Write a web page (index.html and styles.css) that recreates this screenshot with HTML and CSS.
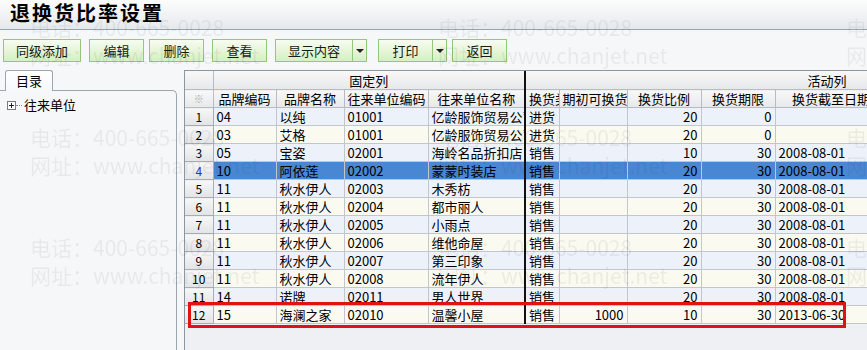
FILE: index.html
```
<!DOCTYPE html>
<html lang="zh-CN">
<head>
    <meta charset="UTF-8">
    <title>退换货比率设置</title>
    <link rel="stylesheet" href="styles.css">
</head>
<body>
    <div class="titlebar">
        <h1>退换货比率设置</h1>
    </div>

    <div class="toolbar">
        <button class="btn btn-wide">同级添加</button>
        <button class="btn">编辑</button>
        <button class="btn btn-near">删除</button>
        <button class="btn">查看</button>
        <div class="split">
            <button class="btn btn-wide">显示内容</button>
            <button class="btn btn-arrow"><span class="caret"></span></button>
        </div>
        <div class="split split-far">
            <button class="btn">打印</button>
            <button class="btn btn-arrow"><span class="caret"></span></button>
        </div>
        <button class="btn btn-near">返回</button>
    </div>

    <div class="main">
        <div class="side">
            <div class="tab">目录</div>
            <div class="panel">
                <div class="tree-item">
                    <span class="expander"></span><span class="dots"></span>往来单位
                </div>
            </div>
        </div>

        <div class="grid">
            <table>
                <colgroup>
                    <col style="width:28px">
                    <col style="width:63px">
                    <col style="width:68px">
                    <col style="width:84px">
                    <col style="width:97px">
                    <col style="width:34px">
                    <col style="width:68px">
                    <col style="width:74px">
                    <col style="width:74px">
                    <col style="width:112px">
                </colgroup>
                <thead>
                    <tr class="group-row">
                        <th></th>
                        <th colspan="4" class="fix-end">固定列</th>
                        <th colspan="5" class="group-active">活动列</th>
                    </tr>
                    <tr class="head-row">
                        <th class="mark">※</th>
                        <th>品牌编码</th>
                        <th>品牌名称</th>
                        <th>往来单位编码</th>
                        <th class="fix-end">往来单位名称</th>
                        <th class="left">换货类型</th>
                        <th class="left">期初可换货数量</th>
                        <th>换货比例</th>
                        <th>换货期限</th>
                        <th>换货截至日期</th>
                    </tr>
                </thead>
                <tbody>
                    <tr class="odd">
                        <td class="num">1</td><td>04</td><td>以纯</td><td>01001</td><td class="fix-end">亿龄服饰贸易公司</td>
                        <td>进货</td><td class="r"></td><td class="r">20</td><td class="r">0</td><td></td>
                    </tr>
                    <tr class="even">
                        <td class="num">2</td><td>03</td><td>艾格</td><td>01001</td><td class="fix-end">亿龄服饰贸易公司</td>
                        <td>进货</td><td class="r"></td><td class="r">20</td><td class="r">0</td><td></td>
                    </tr>
                    <tr class="odd">
                        <td class="num">3</td><td>05</td><td>宝姿</td><td>02001</td><td class="fix-end">海岭名品折扣店</td>
                        <td>销售</td><td class="r"></td><td class="r">10</td><td class="r">30</td><td>2008-08-01</td>
                    </tr>
                    <tr class="selected">
                        <td class="num current">4</td><td>10</td><td>阿依莲</td><td>02002</td><td class="fix-end">蒙蒙时装店</td>
                        <td>销售</td><td class="r"></td><td class="r">20</td><td class="r">30</td><td>2008-08-01</td>
                    </tr>
                    <tr class="odd">
                        <td class="num">5</td><td>11</td><td>秋水伊人</td><td>02003</td><td class="fix-end">木秀枋</td>
                        <td>销售</td><td class="r"></td><td class="r">20</td><td class="r">30</td><td>2008-08-01</td>
                    </tr>
                    <tr class="even">
                        <td class="num">6</td><td>11</td><td>秋水伊人</td><td>02004</td><td class="fix-end">都市丽人</td>
                        <td>销售</td><td class="r"></td><td class="r">20</td><td class="r">30</td><td>2008-08-01</td>
                    </tr>
                    <tr class="odd">
                        <td class="num">7</td><td>11</td><td>秋水伊人</td><td>02005</td><td class="fix-end">小雨点</td>
                        <td>销售</td><td class="r"></td><td class="r">20</td><td class="r">30</td><td>2008-08-01</td>
                    </tr>
                    <tr class="even">
                        <td class="num">8</td><td>11</td><td>秋水伊人</td><td>02006</td><td class="fix-end">维他命屋</td>
                        <td>销售</td><td class="r"></td><td class="r">20</td><td class="r">30</td><td>2008-08-01</td>
                    </tr>
                    <tr class="odd">
                        <td class="num">9</td><td>11</td><td>秋水伊人</td><td>02007</td><td class="fix-end">第三印象</td>
                        <td>销售</td><td class="r"></td><td class="r">20</td><td class="r">30</td><td>2008-08-01</td>
                    </tr>
                    <tr class="even">
                        <td class="num">10</td><td>11</td><td>秋水伊人</td><td>02008</td><td class="fix-end">流年伊人</td>
                        <td>销售</td><td class="r"></td><td class="r">20</td><td class="r">30</td><td>2008-08-01</td>
                    </tr>
                    <tr class="odd">
                        <td class="num">11</td><td>14</td><td>诺牌</td><td>02011</td><td class="fix-end">男人世界</td>
                        <td>销售</td><td class="r"></td><td class="r">20</td><td class="r">30</td><td>2008-08-01</td>
                    </tr>
                    <tr class="even">
                        <td class="num">12</td><td>15</td><td>海澜之家</td><td>02010</td><td class="fix-end">温馨小屋</td>
                        <td>销售</td><td class="r">1000</td><td class="r">10</td><td class="r">30</td><td>2013-06-30</td>
                    </tr>
                </tbody>
            </table>
            <div class="mark-box"></div>
        </div>
    </div>

    <!-- watermark of the screenshot tool -->
    <div class="watermark">
        <div>电话：400-665-0028<br>网址：www.chanjet.net</div>
        <div>电话：400-665-0028<br>网址：www.chanjet.net</div>
        <div>电话：400-665-0028<br>网址：www.chanjet.net</div>
        <div>电话：400-665-0028<br>网址：www.chanjet.net</div>
        <div>电话：400-665-0028<br>网址：www.chanjet.net</div>
        <div>电话：400-665-0028<br>网址：www.chanjet.net</div>
        <div>电话：400-665-0028<br>网址：www.chanjet.net</div>
        <div>电话：400-665-0028<br>网址：www.chanjet.net</div>
        <div>电话：400-665-0028<br>网址：www.chanjet.net</div>
    </div>
</body>
</html>
```

FILE: styles.css
```
/* Basic styles */
body {
    margin: 0;
    padding: 0;
    font-family: "Noto Sans CJK SC", sans-serif;
    background-color: #f6f7f8;
    color: #000;
    width: 867px;
    height: 350px;
    overflow: hidden;
}

/* Title */
.titlebar {
    height: 29px;
    background: linear-gradient(#fcfcfc, #e6e9ec);
    border-bottom: 1px solid #9aa4ae;
}
.titlebar h1 {
    margin: 0;
    padding-left: 10px;
    font-size: 20px;
    font-weight: bold;
    letter-spacing: 2px;
    line-height: 25px;
}

/* Toolbar */
.toolbar {
    display: flex;
    gap: 8px;
    height: 23px;
    padding: 9px 0 0 3px;
}
.btn {
    box-sizing: border-box;
    width: 55px;
    height: 23px;
    padding: 0;
    border: 1px solid #94c67c;
    background: linear-gradient(#f7fcf0, #d6efc2);
    font-family: "Noto Sans CJK SC", sans-serif;
    font-size: 13px;
    color: #1a1a1a;
}
.btn-wide {
    width: 78px;
}
.btn-near {
    margin-left: -3px;
}
.split {
    display: flex;
}
.split-far {
    margin-left: 3px;
}
.btn-arrow {
    width: 15px;
    margin-left: -1px;
    display: flex;
    align-items: center;
    justify-content: center;
}
.caret {
    width: 0;
    height: 0;
    border-left: 4px solid transparent;
    border-right: 4px solid transparent;
    border-top: 4px solid #222;
}

/* Main area */
.main {
    display: flex;
    gap: 7px;
    margin-top: 8px;
    height: 280px;
}
.side {
    width: 177px;
    display: flex;
    flex-direction: column;
}
.tab {
    box-sizing: border-box;
    width: 48px;
    height: 21px;
    margin-left: 5px;
    margin-bottom: -1px;
    border: 1px solid #9ca6b0;
    border-bottom: none;
    border-radius: 3px 3px 0 0;
    background: linear-gradient(#ffffff, #f6f7f9);
    font-size: 13px;
    line-height: 19px;
    text-align: center;
    position: relative;
}
.panel {
    flex: 1;
    border-top: 1px solid #9ca6b0;
    border-right: 1px solid #9ca6b0;
    border-top-right-radius: 5px;
    background-color: #f6f7f9;
    padding: 6px 0 0 7px;
}
.tree-item {
    display: flex;
    align-items: center;
    font-size: 13px;
    line-height: 16px;
}
.expander {
    box-sizing: border-box;
    width: 9px;
    height: 9px;
    border: 1px solid #7a7a7a;
    background:
        linear-gradient(#222, #222) center / 5px 1px no-repeat,
        linear-gradient(#222, #222) center / 1px 5px no-repeat,
        #fff;
}
.dots {
    width: 6px;
    margin-right: 2px;
    border-top: 1px dotted #888;
}

/* Grid */
.grid {
    flex: 1;
    position: relative;
    overflow: hidden;
    border-top: 1px solid #8a96a2;
    border-left: 1px solid #8a96a2;
    background-color: #eef0f3;
}
.grid table {
    border-collapse: collapse;
    table-layout: fixed;
    width: 702px;
    font-size: 13px;
}
.grid th, .grid td {
    height: 17px;
    padding: 0 3px;
    line-height: 17px;
    border: 1px solid #c2c7ce;
    white-space: nowrap;
    overflow: hidden;
    font-weight: normal;
}
.grid th {
    background: linear-gradient(#f8f8f8, #e7e8ea);
    border-color: #b7bcc3;
    text-align: center;
}
.grid .group-row th {
    height: 18px;
    border-top: none;
}
.grid .group-active {
    text-align: right;
    padding-right: 40px;
}
.grid th.left {
    text-align: left;
    text-overflow: clip;
}
.grid th.mark {
    color: #aaa;
    font-size: 10px;
}
.grid tr > :first-child {
    border-left: none;
}
.grid .fix-end {
    border-right: 2px solid #111;
}
.odd td {
    background-color: #edf2fa;
}
.even td {
    background-color: #fbfaf0;
}
.selected td {
    background-color: #4a87d3;
}
.grid td.num {
    background: linear-gradient(#f7f7f7, #e2e3e5);
    border-color: #a9adb3;
    text-align: center;
    padding: 0;
    font-size: 12px;
}
.grid td.current {
    color: #1f3cc4;
}
.grid td.r {
    text-align: right;
}
.mark-box {
    position: absolute;
    left: 3px;
    top: 231px;
    width: 652px;
    height: 20px;
    border: 3px solid #e01212;
}

/* Watermark */
.watermark {
    position: fixed;
    inset: 0;
    display: grid;
    grid-template-columns: repeat(3, 408px);
    grid-auto-rows: 110px;
    padding: 13px 0 0 30px;
    font-size: 21px;
    line-height: 28px;
    color: rgba(0, 0, 0, 0.06);
    pointer-events: none;
    white-space: nowrap;
    overflow: hidden;
}
```
